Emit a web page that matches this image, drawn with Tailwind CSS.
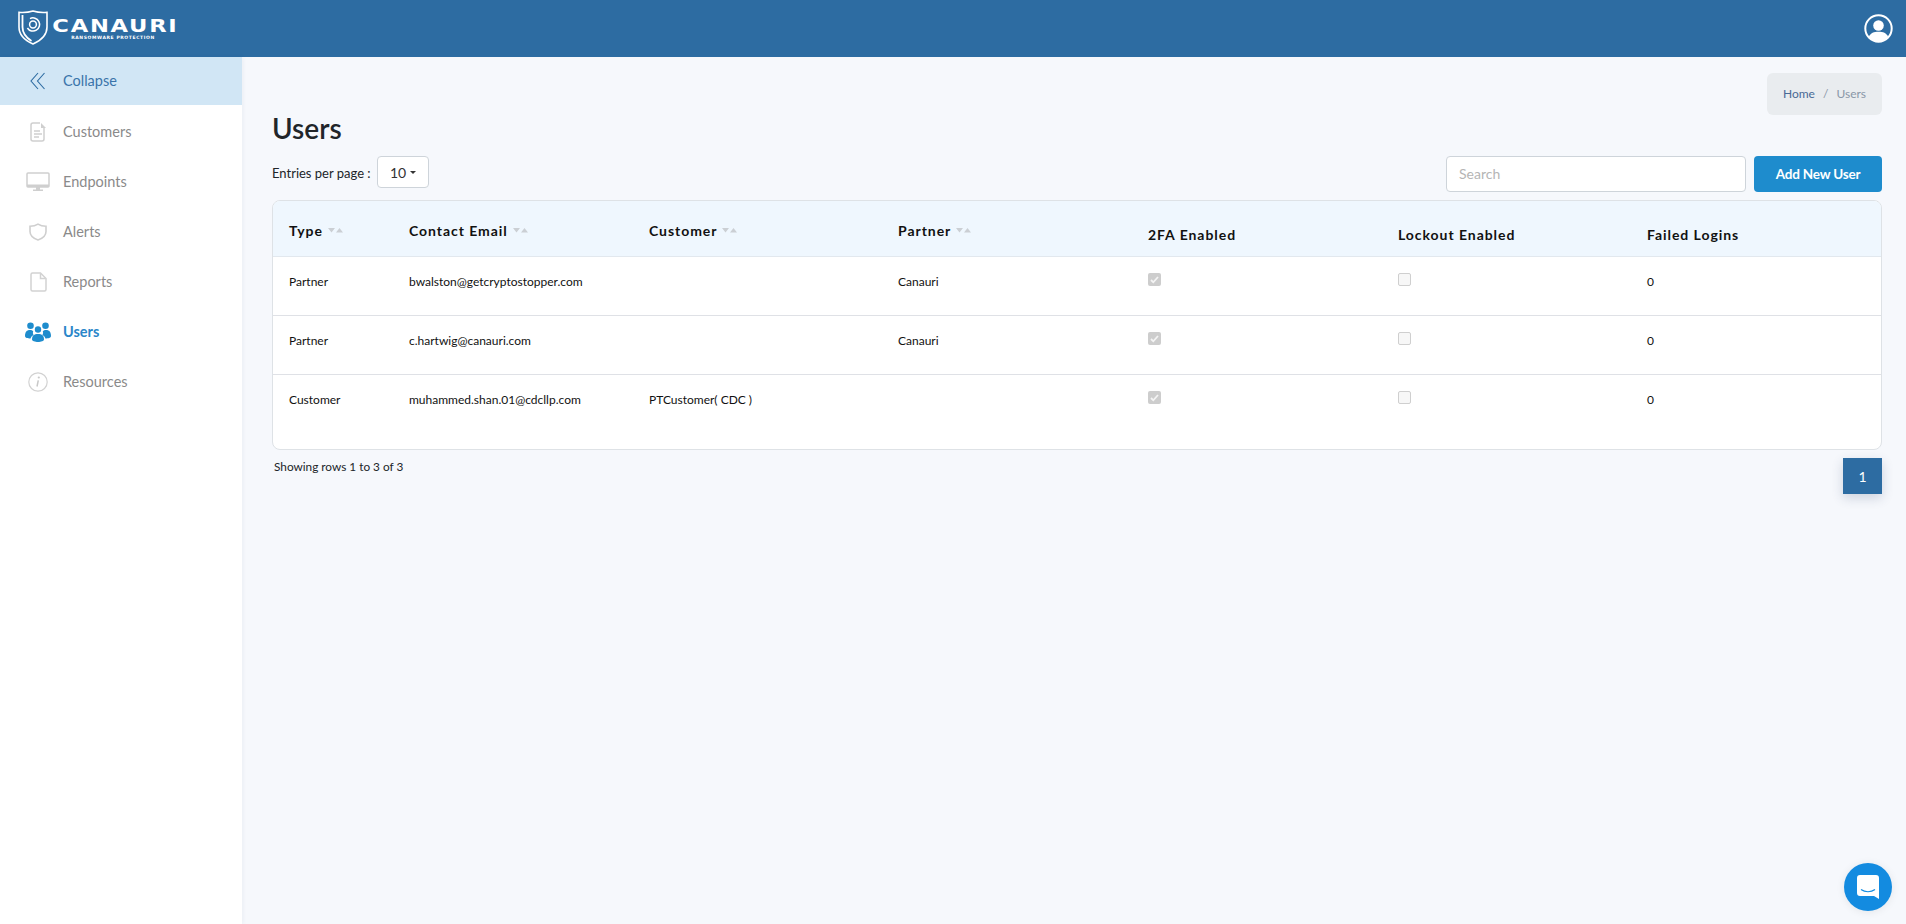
<!DOCTYPE html>
<html lang="en">
<head>
<meta charset="utf-8">
<title>Users</title>
<script src="https://cdn.jsdelivr.net/npm/@tailwindcss/browser@4"></script>
</head>
<body class="h-[924px] overflow-hidden bg-[#f6f8fc] font-['Lato','Liberation_Sans',sans-serif] text-black">
<header class="h-[57px] bg-[#2d6ca2] flex items-center justify-between pl-[18px] pr-[13px]">
  <div class="flex items-center gap-[5px]">
    <svg class="w-[30px] h-[35px] -mt-[2px]" viewBox="0 0 30 35" fill="none">
      <path d="M15 1C10 2.500 5.500 2.800 1 2.300V17C1 25 7 30.500 15 34C23 30.500 29 25 29 17V2.300C24.500 2.800 20 2.500 15 1Z" stroke="#fff" stroke-width="1.600"/>
      <path d="M4.500 5V17C4.500 23 8 27.500 13.500 31" stroke="#fff" stroke-width="1.800"/>
      <circle cx="15" cy="14.500" r="3.400" stroke="#fff" stroke-width="1.500"/>
      <path d="M12 8.600A6.600 6.600 0 1 1 9.400 18" stroke="#fff" stroke-width="1.500"/>
    </svg>
    <div class="flex flex-col items-center w-[124px] pt-[2px]">
      <span class="text-white font-['DejaVu_Sans',sans-serif] font-bold text-[17px] leading-[15px] tracking-[1.300px] scale-x-[1.33]">CANAURI</span>
      <span class="text-white font-['DejaVu_Sans',sans-serif] font-bold text-[4.500px] leading-[6px] tracking-[0.600px] mt-[1px] -ml-[4px]">RANSOMWARE PROTECTION</span>
    </div>
  </div>
  <svg class="w-[29px] h-[29px]" viewBox="0 0 29 29" fill="none">
    <circle cx="14.500" cy="14.500" r="13.200" stroke="#fff" stroke-width="2"/>
    <circle cx="14.500" cy="11.500" r="5.300" fill="#fff"/>
    <path d="M4.800 23C6.500 19 10 17.800 14.500 17.800C19 17.800 22.500 19 24.200 23C21.800 26 18.500 27.700 14.500 27.700C10.500 27.700 7.200 26 4.800 23Z" fill="#fff"/>
  </svg>
</header>
<div class="flex h-[867px]">
  <aside class="w-[242px] shrink-0 bg-white shadow-[1px_0_4px_rgba(30,60,110,0.06)] text-[14.500px] text-[#8a8a8a]">
    <div class="h-[48px] bg-[#d1e6f5] flex items-center text-[#3a74aa]">
      <span class="w-[63px] flex justify-center pl-[13px]">
        <svg class="w-[16px] h-[18px]" viewBox="0 0 16 18" fill="none" stroke="#2d6ca2" stroke-width="1.100"><path d="M8 1L1 9l7 8"/><path d="M14.500 1L7.500 9l7 8"/></svg>
      </span>
      <span class="pb-[1px]">Collapse</span>
    </div>
    <nav class="pt-[2px]">
      <div class="h-[50px] flex items-center">
        <span class="w-[63px] flex justify-center pl-[13px]">
          <svg class="w-[17px] h-[20px]" viewBox="0 0 17 20" fill="none" stroke="#cfcfcf" stroke-width="1.500"><path d="M10 1H3a2 2 0 0 0-2 2v14a2 2 0 0 0 2 2h9a2 2 0 0 0 2-2V6"/><path d="M11 1v5h5z" fill="#cfcfcf" stroke="none"/><path d="M4 9h6M4 12h8M4 15h5"/></svg>
        </span>
        <span>Customers</span>
      </div>
      <div class="h-[50px] flex items-center">
        <span class="w-[63px] flex justify-center pl-[13px]">
          <svg class="w-[24px] h-[20px]" viewBox="0 0 24 20" fill="none"><rect x="1" y="1" width="22" height="14" rx="1" stroke="#cfcfcf" stroke-width="1.500"/><path d="M1 12.500h22V15H1zM10 15h4v2.500h-4zM7 17.500h10V19H7z" fill="#cfcfcf"/></svg>
        </span>
        <span>Endpoints</span>
      </div>
      <div class="h-[50px] flex items-center">
        <span class="w-[63px] flex justify-center pl-[13px]">
          <svg class="w-[18px] h-[18px]" viewBox="0 0 18 18" fill="none" stroke="#cfcfcf" stroke-width="1.600"><path d="M9 1.200C6.500 2.800 4 3.300 1 3.300v5.200c0 3.800 3 6.800 8 8.500 5-1.700 8-4.700 8-8.500V3.300c-3 0-5.500-.5-8-2.100Z"/></svg>
        </span>
        <span>Alerts</span>
      </div>
      <div class="h-[50px] flex items-center">
        <span class="w-[63px] flex justify-center pl-[13px]">
          <svg class="w-[17px] h-[20px]" viewBox="0 0 17 20" fill="none" stroke="#d2d2d2" stroke-width="1.500"><path d="M10.500 1H2.500A1.500 1.500 0 0 0 1 2.500v15A1.500 1.500 0 0 0 2.500 19h12a1.500 1.500 0 0 0 1.500-1.500V6.500Z"/><path d="M10.500 1.500v5h5" /></svg>
        </span>
        <span>Reports</span>
      </div>
      <div class="h-[50px] flex items-center text-[#2a86c9] font-bold">
        <span class="w-[63px] flex justify-center pl-[13px]">
          <svg class="w-[26px] h-[20px]" viewBox="0 0 26 20" fill="#1e8ccd"><circle cx="5.500" cy="3.700" r="3.300"/><circle cx="20.500" cy="3.700" r="3.300"/><circle cx="13" cy="7.500" r="3.200"/><path d="M0 14c0-4 1.800-6 4.800-6 1.600 0 2.600.5 3.400 1.300-.5 1.800-.4 2.500.4 3.700-1.800 1-2.700 2-3 3.500C2.500 16.500 0 15.800 0 14Z"/><path d="M26 14c0-4-1.800-6-4.800-6-1.600 0-2.600.5-3.400 1.300.5 1.800.4 2.500-.4 3.700 1.800 1 2.700 2 3 3.500 3.100 0 5.600-.7 5.600-2.500Z"/><path d="M7 17.500c0-3.800 2-5.500 6-5.500s6 1.700 6 5.500c0 1.500-3 2.500-6 2.500s-6-1-6-2.500Z"/></svg>
        </span>
        <span>Users</span>
      </div>
      <div class="h-[50px] flex items-center">
        <span class="w-[63px] flex justify-center pl-[13px]">
          <svg class="w-[20px] h-[20px]" viewBox="0 0 20 20" fill="none"><circle cx="10" cy="10" r="9.200" stroke="#d2d2d2" stroke-width="1.200"/><circle cx="10.800" cy="5.500" r="1.100" fill="#c8c8c8"/><path d="M10.300 8.300 9 14.500" stroke="#c8c8c8" stroke-width="1.500"/></svg>
        </span>
        <span>Resources</span>
      </div>
    </nav>
  </aside>
  <main class="flex-1 pl-[30px] pr-[24px] pt-[16px]">
    <div class="flex justify-end">
      <div class="h-[42px] w-[115px] rounded-[6px] bg-[#e9ecef] flex items-center justify-center gap-[8px] text-[12px] text-[#8a97a8]">
        <span class="text-[#4a6a96]">Home</span><span>/</span><span>Users</span>
      </div>
    </div>
    <h1 class="text-[28px] leading-[34px] font-semibold text-[#212529] -mt-[4px]">Users</h1>
    <div class="flex items-center justify-between h-[36px] mt-[11px]">
      <div class="flex items-center self-start">
        <span class="text-[13px] text-[#212529] w-[105px] pt-[4px]">Entries per page :</span>
        <div class="w-[52px] h-[32px] bg-white border border-[#ced4da] rounded-[4px] flex items-center justify-center gap-[4px] text-[14px] text-[#333]">
          10<span class="border-x-[3px] border-x-transparent border-t-[3px] border-t-[#333]"></span>
        </div>
      </div>
      <div class="flex items-center gap-[8px]">
        <div class="w-[300px] h-[36px] bg-white border border-[#ced4da] rounded-[4px] flex items-center px-[12px] pb-[2px] text-[14px] text-[#b5b5b5]">Search</div>
        <div class="w-[128px] h-[36px] bg-[#1e8ccd] rounded-[4px] flex items-center justify-center text-white text-[13.500px] font-bold tracking-[-0.2px]">Add New User</div>
      </div>
    </div>
    <div class="mt-[8px] h-[250px] bg-white border border-[#dee2e6] rounded-[8px] overflow-hidden">
      <table class="w-full table-fixed text-[12px] text-[#111]">
        <colgroup><col class="w-[136px]"><col class="w-[240px]"><col class="w-[249px]"><col class="w-[250px]"><col class="w-[250px]"><col class="w-[249px]"><col></colgroup>
        <thead class="bg-[#eff7fe]">
          <tr class="h-[55px] border-b border-[#e2e8ee] text-left text-[14px] font-bold tracking-[0.950px]">
            <th class="pl-[16px] font-bold align-middle"><span class="flex items-center gap-[5px] pt-[4px]">Type<svg class="w-[15px] h-[5px]" viewBox="0 0 15 5" fill="#cbcfd4"><path d="M0 0h7L3.500 4.500zM8 4.500h7L11.500 0z"/></svg></span></th>
            <th class="pl-[0px] font-bold"><span class="flex items-center gap-[5px] pt-[4px]">Contact Email<svg class="w-[15px] h-[5px]" viewBox="0 0 15 5" fill="#cbcfd4"><path d="M0 0h7L3.500 4.500zM8 4.500h7L11.500 0z"/></svg></span></th>
            <th class="font-bold"><span class="flex items-center gap-[5px] pt-[4px]">Customer<svg class="w-[15px] h-[5px]" viewBox="0 0 15 5" fill="#cbcfd4"><path d="M0 0h7L3.500 4.500zM8 4.500h7L11.500 0z"/></svg></span></th>
            <th class="font-bold"><span class="flex items-center gap-[5px] pt-[4px]">Partner<svg class="w-[15px] h-[5px]" viewBox="0 0 15 5" fill="#cbcfd4"><path d="M0 0h7L3.500 4.500zM8 4.500h7L11.500 0z"/></svg></span></th>
            <th class="font-bold"><span class="block pt-[12px]">2FA Enabled</span></th>
            <th class="font-bold"><span class="block pt-[12px]">Lockout Enabled</span></th>
            <th class="font-bold"><span class="block pt-[12px]">Failed Logins</span></th>
          </tr>
        </thead>
        <tbody>
          <tr class="h-[59px] border-b border-[#dfe1e6]">
            <td class="pl-[16px] align-top pt-[16px]">Partner</td><td class="align-top pt-[16px]">bwalston@getcryptostopper.com</td><td></td><td class="align-top pt-[16px]">Canauri</td>
            <td class="align-top pt-[16px]"><span class="flex w-[13px] h-[13px] rounded-[2px] bg-[#cdcdcd] items-center justify-center"><svg class="w-[9px] h-[9px]" viewBox="0 0 9 9" fill="none" stroke="#f4f4f4" stroke-width="1.800"><path d="M1 5l2.300 2.300L8 2"/></svg></span></td>
            <td class="align-top pt-[16px]"><span class="block w-[13px] h-[13px] rounded-[2px] bg-[#f7f7f7] border border-[#cfcfcf]"></span></td>
            <td class="align-top pt-[16px]">0</td>
          </tr>
          <tr class="h-[59px] border-b border-[#dfe1e6]">
            <td class="pl-[16px] align-top pt-[16px]">Partner</td><td class="align-top pt-[16px]">c.hartwig@canauri.com</td><td></td><td class="align-top pt-[16px]">Canauri</td>
            <td class="align-top pt-[16px]"><span class="flex w-[13px] h-[13px] rounded-[2px] bg-[#cdcdcd] items-center justify-center"><svg class="w-[9px] h-[9px]" viewBox="0 0 9 9" fill="none" stroke="#f4f4f4" stroke-width="1.800"><path d="M1 5l2.300 2.300L8 2"/></svg></span></td>
            <td class="align-top pt-[16px]"><span class="block w-[13px] h-[13px] rounded-[2px] bg-[#f7f7f7] border border-[#cfcfcf]"></span></td>
            <td class="align-top pt-[16px]">0</td>
          </tr>
          <tr class="h-[59px]">
            <td class="pl-[16px] align-top pt-[16px]">Customer</td><td class="align-top pt-[16px]">muhammed.shan.01@cdcllp.com</td><td class="align-top pt-[16px]">PTCustomer( CDC )</td><td></td>
            <td class="align-top pt-[16px]"><span class="flex w-[13px] h-[13px] rounded-[2px] bg-[#cdcdcd] items-center justify-center"><svg class="w-[9px] h-[9px]" viewBox="0 0 9 9" fill="none" stroke="#f4f4f4" stroke-width="1.800"><path d="M1 5l2.300 2.300L8 2"/></svg></span></td>
            <td class="align-top pt-[16px]"><span class="block w-[13px] h-[13px] rounded-[2px] bg-[#f7f7f7] border border-[#cfcfcf]"></span></td>
            <td class="align-top pt-[16px]">0</td>
          </tr>
        </tbody>
      </table>
    </div>
    <div class="flex justify-between mt-[8px]">
      <span class="text-[11.800px] text-[#212529] pl-[2px] leading-[18px]">Showing rows 1 to 3 of 3</span>
      <span class="w-[39px] h-[36px] bg-[#2d6ca2] text-white text-[14px] flex items-center justify-center shadow-[0_4px_12px_rgba(40,60,100,0.2)]">1</span>
    </div>
  </main>
</div>
<div class="fixed right-[14px] bottom-[13px] w-[48px] h-[48px] rounded-full bg-[#138be0] flex items-center justify-center shadow-[0_1px_8px_rgba(0,0,0,0.08)]">
  <svg class="w-[22px] h-[24px]" viewBox="0 0 22 24"><path d="M3 0h16a3 3 0 0 1 3 3v21l-5-3H3a3 3 0 0 1-3-3V3a3 3 0 0 1 3-3Z" fill="#fff"/><path d="M4 14.500c4 3 10 3 14 0" fill="none" stroke="#138be0" stroke-width="1.200"/></svg>
</div>
</body>
</html>
